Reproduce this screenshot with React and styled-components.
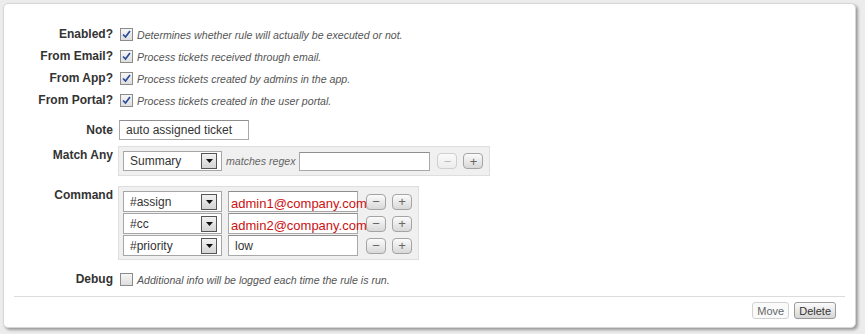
import React from 'react';
import styled, { createGlobalStyle } from 'styled-components';

const GlobalStyle = createGlobalStyle`
  html, body {
    margin: 0;
    padding: 0;
    background: #ececec;
    font-family: "Liberation Sans", Arial, sans-serif;
  }
`;

const Page = styled.div`
  padding: 3px 9px 6px 3px;
  width: 865px;
  height: 334px;
  box-sizing: border-box;
`;

const Card = styled.div`
  background: #fff;
  border: 1px solid #d6d6d6;
  border-radius: 5px;
  box-shadow: 2px 2px 3px rgba(0, 0, 0, 0.35);
  height: 325px;
  box-sizing: border-box;
  padding-top: 19px;
  display: flex;
  flex-direction: column;
`;

const Field = styled.div`
  display: grid;
  grid-template-columns: 109px 1fr;
  column-gap: 6px;
  align-items: ${(p) => (p.$top ? 'start' : 'center')};
  min-height: 22px;
  margin-top: ${(p) => p.$mt || 0}px;
`;

const Label = styled.div`
  text-align: right;
  font-weight: bold;
  font-size: 12px;
  color: #333;
  padding-top: ${(p) => p.$pt || 0}px;
`;

const Inline = styled.div`
  display: flex;
  align-items: center;
  gap: 4px;
`;

const Hint = styled.span`
  font-style: italic;
  font-size: 10.6px;
  color: #555;
  margin-top: 2px;
`;

const CheckBox = styled.span`
  width: 11px;
  height: 11px;
  margin-left: 1px;
  border: 1px solid #8c8c8c;
  background: linear-gradient(#f6f6f6, #dedede);
  display: inline-flex;
  align-items: center;
  justify-content: center;
`;

const Check = ({ on }) => (
  <CheckBox>
    {on && (
      <svg width="9" height="9" viewBox="0 0 9 9">
        <path d="M1 4.5 L3.5 7 L8 1" fill="none" stroke="#2a4a9a" strokeWidth="1.7" />
      </svg>
    )}
  </CheckBox>
);

const TextBox = styled.div`
  width: ${(p) => p.$w}px;
  height: ${(p) => p.$h || 20}px;
  box-sizing: border-box;
  border: 1px solid #a9a9a9;
  border-top-color: #8f8f8f;
  background: #fff;
  font-size: 12px;
  color: #333;
  padding-left: 6px;
  display: flex;
  align-items: center;
  white-space: nowrap;
  overflow: visible;
  position: relative;
  z-index: ${(p) => (p.$over ? 2 : 0)};
`;

const RedText = styled.span`
  color: #cc1111;
  font-size: 13px;
  margin-left: -4px;
  margin-top: 4px;
`;

const Panel = styled.div`
  background: #f0f0f0;
  border: 1px solid #dedede;
  padding: ${(p) => p.$pad};
  margin-left: -1px;
  width: fit-content;
  display: flex;
  flex-direction: column;
  gap: 1px;
`;

const Line = styled.div`
  display: flex;
  align-items: center;
`;

const Select = styled.div`
  width: 99px;
  height: ${(p) => p.$h || 20}px;
  box-sizing: border-box;
  border: 1px solid #a6a6a6;
  background: #fff;
  display: flex;
  align-items: center;
  justify-content: space-between;
  padding: 0 4px 0 6px;
  font-size: 12px;
  color: #333;
`;

const Arrow = styled.span`
  width: 14px;
  height: 14px;
  border: 1px solid #555;
  background: linear-gradient(#f2f2f2, #d4d4d4);
  display: flex;
  align-items: center;
  justify-content: center;
`;

const Mini = styled.span`
  width: 18px;
  height: 14px;
  border: 1px solid ${(p) => (p.$off ? '#cfcfcf' : '#a4a4a4')};
  border-radius: 4px;
  background: ${(p) => (p.$off ? 'linear-gradient(#fafafa, #ececec)' : 'linear-gradient(#fbfbfb, #d8d8d8)')};
  color: ${(p) => (p.$off ? '#bbb' : '#666')};
  font-size: 13px;
  line-height: 13px;
  display: inline-flex;
  align-items: center;
  justify-content: center;
  margin-left: ${(p) => p.$ml || 0}px;
`;

const Italic = styled.span`
  font-style: italic;
  font-size: 10.6px;
  color: #666;
  margin: 0 4px 0 4px;
`;

const Rule = styled.div`
  height: 1px;
  background: #dcdcdc;
  margin: 6px 10px 0 10px;
`;

const Footer = styled.div`
  display: flex;
  justify-content: flex-end;
  gap: 5px;
  padding: 5px 19px 0 0;
`;

const Btn = styled.span`
  height: 15px;
  padding: 0 4px;
  border: 1px solid ${(p) => (p.$primary ? '#9a9a9a' : '#d2d2d2')};
  border-radius: 3px;
  background: ${(p) => (p.$primary ? 'linear-gradient(#fbfbfb, #d6d6d6)' : '#fafafa')};
  color: ${(p) => (p.$primary ? '#333' : '#666')};
  font-size: 11px;
  display: inline-flex;
  align-items: center;
`;

const DropArrow = () => (
  <Arrow>
    <svg width="7" height="4" viewBox="0 0 7 4">
      <path d="M0 0 H7 L3.5 4 Z" fill="#111" />
    </svg>
  </Arrow>
);

const flags = [
  ['Enabled?', true, 'Determines whether rule will actually be executed or not.'],
  ['From Email?', true, 'Process tickets received through email.'],
  ['From App?', true, 'Process tickets created by admins in the app.'],
  ['From Portal?', true, 'Process tickets created in the user portal.'],
];

const commands = [
  { cmd: '#assign', value: 'admin1@company.com', red: true },
  { cmd: '#cc', value: 'admin2@company.com', red: true },
  { cmd: '#priority', value: 'low' },
];

export default function App() {
  return (
    <Page>
      <GlobalStyle />
      <Card>
        {flags.map(([label, on, hint]) => (
          <Field key={label}>
            <Label>{label}</Label>
            <Inline>
              <Check on={on} />
              <Hint>{hint}</Hint>
            </Inline>
          </Field>
        ))}

        <Field $mt={8}>
          <Label>Note</Label>
          <TextBox $w={130}>auto assigned ticket</TextBox>
        </Field>

        <Field $top $mt={5}>
          <Label $pt={2}>Match Any</Label>
          <Panel $pad="4px 6px 4px 4px">
            <Line>
              <Select>
                Summary
                <DropArrow />
              </Select>
              <Italic>matches regex</Italic>
              <TextBox $w={131} $h={19} />
              <Mini $off $ml={7}>−</Mini>
              <Mini $ml={6}>+</Mini>
            </Line>
          </Panel>
        </Field>

        <Field $top $mt={10}>
          <Label $pt={2}>Command</Label>
          <Panel $pad="4px 6px 3px 4px">
            {commands.map((c) => (
              <Line key={c.cmd}>
                <Select $h={21}>
                  {c.cmd}
                  <DropArrow />
                </Select>
                <TextBox $w={130} $h={21} $over={c.red} style={{ marginLeft: 6 }}>
                  {c.red ? <RedText>{c.value}</RedText> : c.value}
                </TextBox>
                <Mini $ml={8}>−</Mini>
                <Mini $ml={6}>+</Mini>
              </Line>
            ))}
          </Panel>
        </Field>

        <Field $mt={8}>
          <Label>Debug</Label>
          <Inline>
            <Check />
            <Hint>Additional info will be logged each time the rule is run.</Hint>
          </Inline>
        </Field>

        <Rule />
        <Footer>
          <Btn>Move</Btn>
          <Btn $primary>Delete</Btn>
        </Footer>
      </Card>
    </Page>
  );
}
